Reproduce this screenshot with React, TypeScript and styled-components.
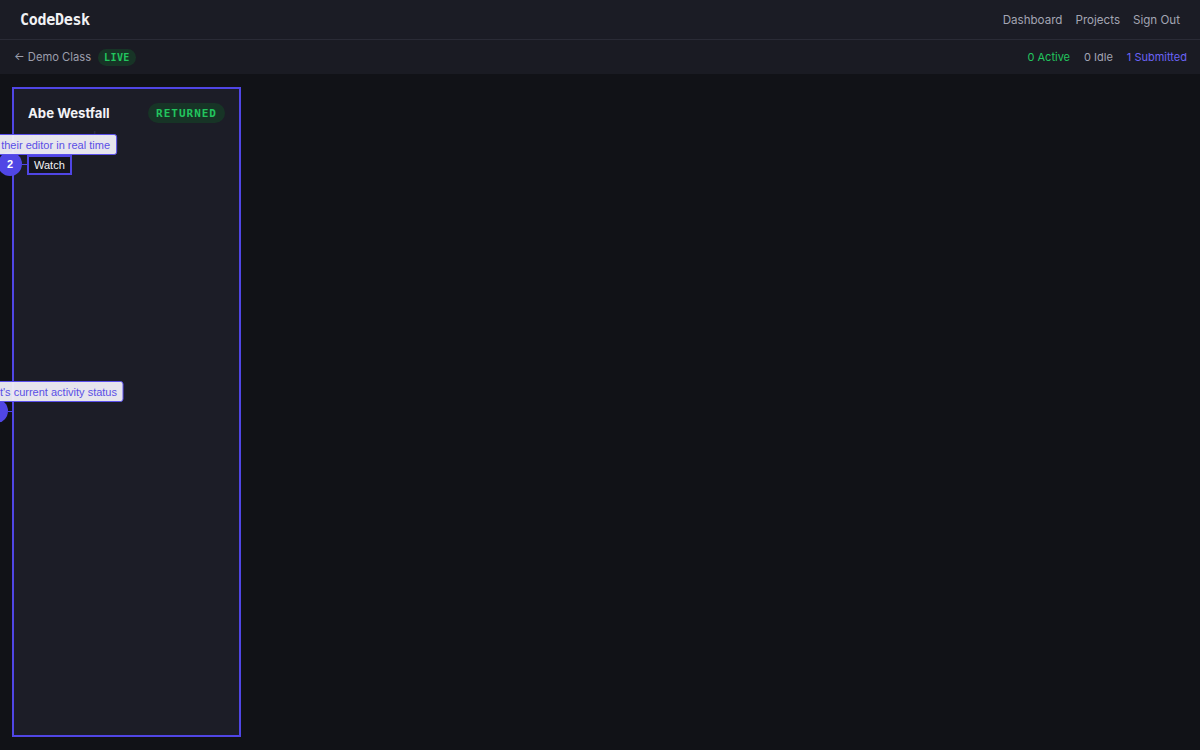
import React from 'react';
import styled, { createGlobalStyle } from 'styled-components';

const GlobalStyle = createGlobalStyle`
    html, body {
        margin: 0;
        padding: 0;
        background: #111217;
        font-family: Inter, "Noto Sans", sans-serif;
    }
    * {
        box-sizing: border-box;
    }
`;

const Page = styled.div`
    position: relative;
    width: 1200px;
    height: 750px;
    overflow: hidden;
    background: #111217;
    display: flex;
    flex-direction: column;
`;

const TopBar = styled.header`
    height: 40px;
    padding: 0 20px;
    background: #1b1c25;
    border-bottom: 1px solid #2a2b36;
    display: flex;
    align-items: center;
    justify-content: space-between;
`;

const Logo = styled.div`
    font-family: "DejaVu Sans Mono", monospace;
    font-weight: 700;
    font-size: 15px;
    color: #f1f1f4;
    letter-spacing: -0.3px;
`;

const Nav = styled.nav`
    display: flex;
    gap: 13px;
`;

const NavLink = styled.a`
    font-size: 11.6px;
    color: #a3a5b3;
    text-decoration: none;
`;

const SubBar = styled.div`
    height: 34px;
    padding: 0 13px 0 14px;
    background: #1a1b23;
    display: flex;
    align-items: center;
    justify-content: space-between;
`;

const BackLink = styled.div`
    display: flex;
    align-items: center;
    gap: 7px;
    font-size: 11.2px;
    color: #9c9eac;
`;

const Badge = styled.span<{ $big?: boolean }>`
    font-family: "DejaVu Sans Mono", monospace;
    font-weight: 700;
    font-size: ${p => (p.$big ? 11 : 10)}px;
    letter-spacing: ${p => (p.$big ? 1 : 0.4)}px;
    color: #22c55e;
    background: #173426;
    border-radius: 10px;
    padding: 0 ${p => (p.$big ? 8 : 6)}px;
    height: ${p => (p.$big ? 20 : 17)}px;
    display: inline-flex;
    align-items: center;
`;

const Stats = styled.div`
    display: flex;
    gap: 14px;
    font-size: 11px;
`;

const Stat = styled.span<{ $tone: 'green' | 'gray' | 'purple' }>`
    color: ${p => (p.$tone === 'green' ? '#22c55e' : p.$tone === 'purple' ? '#6b63f6' : '#a3a5b3')};
`;

const Main = styled.main`
    flex: 1;
    padding: 13px 12px;
    display: flex;
`;

const Card = styled.section`
    width: 229px;
    height: 650px;
    background: #1c1d27;
    border: 2px solid #5046e5;
    padding: 14px;
    display: flex;
    flex-direction: column;
`;

const CardHead = styled.div`
    display: flex;
    align-items: center;
    justify-content: space-between;
    height: 20px;
`;

const Name = styled.div`
    font-size: 13.2px;
    font-weight: 700;
    color: #f3f3f6;
`;

const FileName = styled.div`
    font-family: "DejaVu Sans Mono", monospace;
    font-size: 12px;
    color: #2f313e;
    margin-top: 6px;
    height: 16px;
    line-height: 16px;
`;

const WatchButton = styled.button`
    margin-top: 10px;
    margin-left: -1px;
    align-self: flex-start;
    height: 20px;
    padding: 0 5px;
    background: #15161d;
    border: 2px solid #5046e5;
    color: #f3f3f6;
    font-family: "Liberation Sans", Arial, sans-serif;
    font-size: 11px;
    display: flex;
    align-items: center;
`;

const Tip = styled.div<{ $left: number; $top: number }>`
    position: absolute;
    left: ${p => p.$left}px;
    top: ${p => p.$top}px;
    transform: translateX(-100%);
    white-space: nowrap;
    height: 21px;
    padding: 0 6px;
    display: flex;
    align-items: center;
    background: rgba(241, 240, 248, 0.95);
    border: 1px solid #5b50ea;
    border-radius: 3px;
    color: #5a4fe6;
    font-family: "Liberation Sans", Arial, sans-serif;
    font-size: 11px;
`;

const Step = styled.div<{ $x: number; $y: number }>`
    position: absolute;
    left: ${p => p.$x - 12}px;
    top: ${p => p.$y - 12}px;
    width: 24px;
    height: 24px;
    border-radius: 50%;
    background: #5046e5;
    color: #fff;
    font-family: "Liberation Sans", Arial, sans-serif;
    font-weight: 700;
    font-size: 11px;
    display: flex;
    align-items: center;
    justify-content: center;
`;

const Connector = styled.div<{ $x: number; $y: number; $w: number }>`
    position: absolute;
    left: ${p => p.$x}px;
    top: ${p => p.$y}px;
    width: ${p => p.$w}px;
    height: 1px;
    background: #5046e5;
`;

const App: React.FC = () => {
    return (
        <>
            <GlobalStyle />
            <Page>
                <TopBar>
                    <Logo>CodeDesk</Logo>
                    <Nav>
                        <NavLink>Dashboard</NavLink>
                        <NavLink>Projects</NavLink>
                        <NavLink>Sign Out</NavLink>
                    </Nav>
                </TopBar>
                <SubBar>
                    <BackLink>
                        <span>← Demo Class</span>
                        <Badge>LIVE</Badge>
                    </BackLink>
                    <Stats>
                        <Stat $tone="green">0 Active</Stat>
                        <Stat $tone="gray">0 Idle</Stat>
                        <Stat $tone="purple">1 Submitted</Stat>
                    </Stats>
                </SubBar>
                <Main>
                    <Card>
                        <CardHead>
                            <Name>Abe Westfall</Name>
                            <Badge $big>RETURNED</Badge>
                        </CardHead>
                        <FileName>process.php</FileName>
                        <WatchButton>Watch</WatchButton>
                    </Card>
                </Main>

                {/* guided tour overlays */}
                <Connector $x={22} $y={164} $w={6} />
                <Step $x={10} $y={164}>2</Step>
                <Tip $left={117} $top={134}>Watch a student work in their editor in real time</Tip>

                <Connector $x={8} $y={411} $w={6} />
                <Step $x={-4} $y={411}>1</Step>
                <Tip $left={124} $top={381}>Shows the student's current activity status</Tip>
            </Page>
        </>
    );
};

export default App;
